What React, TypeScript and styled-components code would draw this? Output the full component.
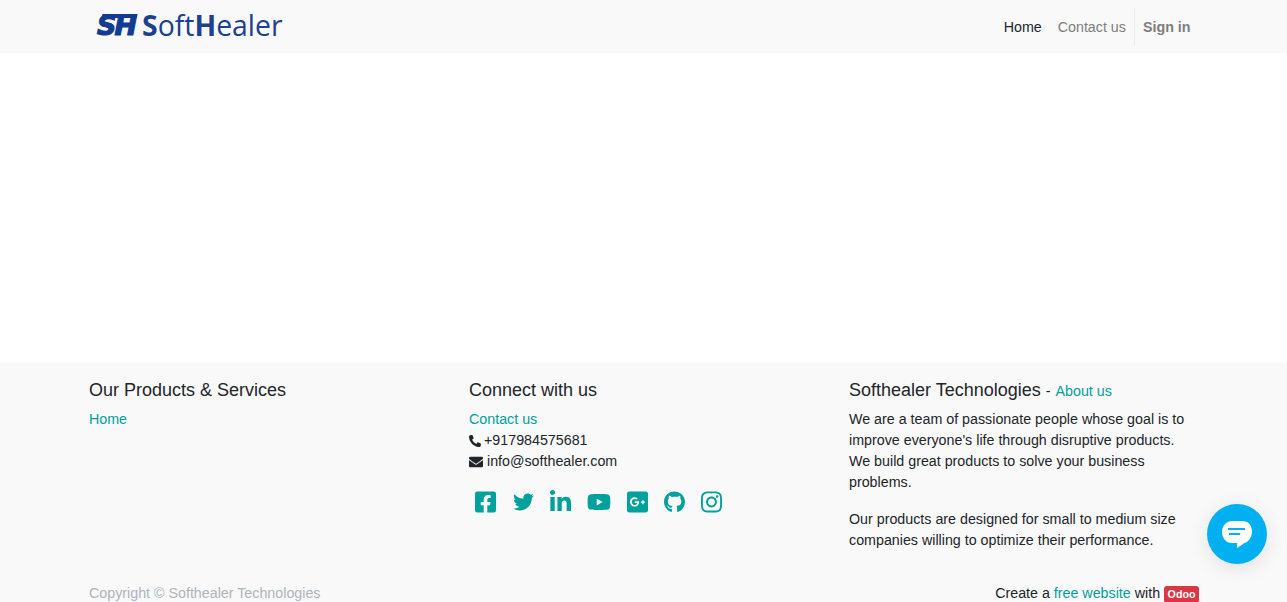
import React from 'react'
import styled, { createGlobalStyle } from 'styled-components'
import {
  FaFacebookSquare,
  FaTwitter,
  FaLinkedinIn,
  FaYoutube,
  FaGooglePlusSquare,
  FaGithub,
  FaInstagram,
  FaPhoneAlt,
  FaEnvelope,
} from 'react-icons/fa'

const GlobalStyle = createGlobalStyle`
  html, body {
    margin: 0;
    height: 100%;
    overflow: hidden;
    background: #fff;
  }
  body {
    font-family: "Liberation Sans", Arial, sans-serif;
    font-size: 14.28px;
    line-height: 21px;
    color: #212529;
  }
`

const Container = styled.div`
  width: 1110px;
  margin: 0 auto;
  position: relative;
  left: 0.5px;
`

const Navbar = styled.header`
  height: 53px;
  background: #f9f9f9;
`

const NavInner = styled(Container)`
  height: 53px;
  display: flex;
  align-items: center;
  justify-content: space-between;
`

const Brand = styled.a`
  display: flex;
  align-items: center;
  gap: 5px;
  margin-left: 6px;
  margin-top: -3px;
`

const BrandMark = styled.span`
  position: relative;
  width: 42px;
  height: 24px;
  color: #123c8f;
  font-family: "DejaVu Sans", sans-serif;
  font-style: italic;
  font-weight: 700;
  font-size: 27px;
  line-height: 25px;
  letter-spacing: -2px;
  -webkit-text-stroke: 1.2px #123c8f;
  text-align: center;
  white-space: nowrap;
  &::before {
    content: '';
    position: absolute;
    left: 7px;
    right: 0;
    top: 1px;
    height: 4px;
    background: #123c8f;
    transform: skewX(-14deg);
  }
`

const BrandName = styled.span`
  font-family: "Open Sans", sans-serif;
  font-size: 28.4px;
  line-height: 30px;
  color: #1b418f;
  b {
    font-weight: 700;
  }
`

const NavList = styled.nav`
  display: flex;
  align-items: center;
  margin-top: 1px;
  margin-right: 0.5px;
`

const NavLink = styled.a<{ $active?: boolean }>`
  padding: 0 8px;
  color: ${(p) => (p.$active ? '#212529' : '#7d7d7d')};
`

const SignIn = styled.a`
  padding: 0 8px;
  height: 38px;
  display: flex;
  align-items: center;
  border-left: 1px solid #ececec;
  color: #7d7d7d;
  font-weight: 700;
`

const Main = styled.main`
  height: 309px;
  background: #fff;
`

const Footer = styled.footer`
  height: 240px;
  background: #f9f9f9;
  padding-top: 18px;
  box-sizing: border-box;
`

const Columns = styled.div`
  display: grid;
  grid-template-columns: 380px 380px 350px;
  height: 203px;
`

const Heading = styled.h5`
  margin: 0 0 8px;
  font-size: 18px;
  line-height: 21px;
  font-weight: 400;
  small {
    font-size: 14.28px;
  }
`

const AboutHeading = styled(Heading)`
  margin-bottom: 7px;
`

const Link = styled.a`
  color: #00a09d;
`

const AboutLink = styled(Link)`
  margin-left: 1px;
`

const Line = styled.div`
  display: flex;
  align-items: center;
  gap: 3px;
  svg {
    width: 12px;
    height: 12px;
  }
`

const MailLine = styled(Line)`
  gap: 4px;
  svg {
    width: 14px;
    height: 14px;
  }
`

const Socials = styled.div`
  display: flex;
  align-items: center;
  gap: 16px;
  margin-top: 19px;
  padding-left: 6px;
  color: #00a09d;
`

const SocialIcon = styled.span<{ $wide?: boolean }>`
  width: ${(p) => (p.$wide ? '24px' : '21px')};
  height: 21px;
  display: flex;
  align-items: center;
  justify-content: center;
  &:first-child {
    margin-right: 1px;
  }
  svg {
    width: 100%;
    height: 24px;
    flex: none;
  }
`

const Para = styled.p`
  margin: 0 0 16px;
`

const BottomRow = styled.div`
  display: flex;
  justify-content: space-between;
`

const Copyright = styled.span`
  color: #adb5bd;
`

const Credit = styled.span`
  display: flex;
  align-items: center;
  gap: 4px;
`

const Badge = styled.span`
  background: #dc3545;
  color: #fff;
  font-size: 10.7px;
  font-weight: 700;
  line-height: 11px;
  padding: 3px 3.5px 2.5px;
  border-radius: 3px;
  margin-top: 2px;
`

const ChatButton = styled.button`
  position: fixed;
  left: 1207px;
  top: 504px;
  width: 60px;
  height: 60px;
  padding: 0;
  border: 0;
  border-radius: 50%;
  background: #00b0f0;
  box-shadow: 0 4px 20px rgba(0, 0, 0, 0.1);
  display: flex;
  align-items: center;
  justify-content: center;
`

const socialIcons = [
  { Icon: FaFacebookSquare },
  { Icon: FaTwitter },
  { Icon: FaLinkedinIn },
  { Icon: FaYoutube, wide: true },
  { Icon: FaGooglePlusSquare },
  { Icon: FaGithub },
  { Icon: FaInstagram },
]

export default function App() {
  return (
    <>
      <GlobalStyle />
      <Navbar>
        <NavInner>
          <Brand>
            <BrandMark>SH</BrandMark>
            <BrandName>
              <b>S</b>oft<b>H</b>ealer
            </BrandName>
          </Brand>
          <NavList>
            <NavLink $active>Home</NavLink>
            <NavLink>Contact us</NavLink>
            <SignIn>Sign in</SignIn>
          </NavList>
        </NavInner>
      </Navbar>
      <Main />
      <Footer>
        <Container>
          <Columns>
            <div>
              <Heading>Our Products &amp; Services</Heading>
              <Link>Home</Link>
            </div>
            <div>
              <Heading>Connect with us</Heading>
              <div>
                <Link>Contact us</Link>
              </div>
              <Line>
                <FaPhoneAlt />
                +917984575681
              </Line>
              <MailLine>
                <FaEnvelope />
                info@softhealer.com
              </MailLine>
              <Socials>
                {socialIcons.map(({ Icon, wide }, i) => (
                  <SocialIcon key={i} $wide={wide}>
                    <Icon />
                  </SocialIcon>
                ))}
              </Socials>
            </div>
            <div>
              <AboutHeading>
                Softhealer Technologies <small>- <AboutLink>About us</AboutLink></small>
              </AboutHeading>
              <Para>
                We are a team of passionate people whose goal is to improve
                everyone's life through disruptive products. We build great
                products to solve your business problems.
              </Para>
              <Para>
                Our products are designed for small to medium size companies
                willing to optimize their performance.
              </Para>
            </div>
          </Columns>
          <BottomRow>
            <Copyright>Copyright © Softhealer Technologies</Copyright>
            <Credit>
              <span>
                Create a <Link>free website</Link> with
              </span>
              <Badge>Odoo</Badge>
            </Credit>
          </BottomRow>
        </Container>
      </Footer>
      <ChatButton>
        <svg width="34" height="34" viewBox="0 0 34 34">
          <path
            d="M12 4h10c6 0 10 4 10 10.500S28 25.500 24 26c-2 2-4.500 3.500-7 5v-5h-5C6 26 2 21 2 15S6 4 12 4z"
            fill="#fff"
          />
          <rect x="8" y="11" width="17" height="2" fill="#00b0f0" />
          <rect x="9" y="16" width="11" height="2" fill="#00b0f0" />
        </svg>
      </ChatButton>
    </>
  )
}
